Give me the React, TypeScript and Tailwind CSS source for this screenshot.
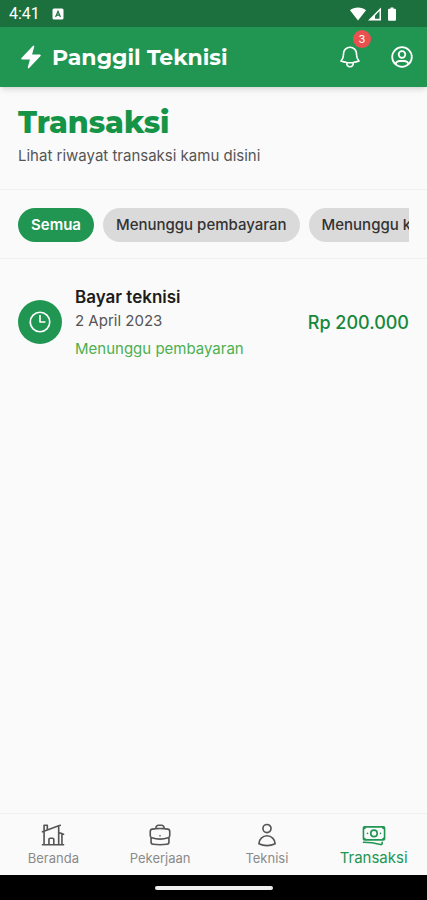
import React, { useState } from "react";
import classNames from "clsx";
import {
  HiBolt,
  HiOutlineBanknotes,
  HiOutlineBell,
  HiOutlineBriefcase,
  HiOutlineClock,
  HiOutlineHomeModern,
  HiOutlineUser,
} from "react-icons/hi2";

const filters = ["Semua", "Menunggu pembayaran", "Menunggu konfirmasi"];

const transactions = [
  {
    id: 1,
    title: "Bayar teknisi",
    date: "2 April 2023",
    status: "Menunggu pembayaran",
    total: "Rp 200.000",
  },
];

const tabs = [
  { label: "Beranda", icon: HiOutlineHomeModern },
  { label: "Pekerjaan", icon: HiOutlineBriefcase },
  { label: "Teknisi", icon: HiOutlineUser },
  { label: "Transaksi", icon: HiOutlineBanknotes },
];

const StatusBar: React.FC = () => {
  return (
    <div className="flex h-[27px] items-center bg-[#1b703e] pr-7 pl-[9px] text-white">
      <span className="font-['Roboto',sans-serif] text-base">4:41</span>
      <svg className="ml-3 size-3" viewBox="0 0 12 12">
        <rect x="0.5" y="0.5" width="11" height="11" rx="1.5" fill="#fff" />
        <path
          d="M3.6 9 6 3.2 8.4 9M4.5 7.2h3"
          fill="none"
          stroke="#1b703e"
          strokeWidth="1.2"
        />
      </svg>
      <svg className="ml-auto h-4 w-[50px]" viewBox="0 0 50 16" fill="#fff">
        <path d="M1 4.2C5.2.6 12.8.6 17 4.2L9 14.5Z" />
        <path d="M19 14.5 32 1.5V14.5Z" />
        <path d="M26 12.8V9.5L30.5 5V12.8Z" fill="#1b703e" />
        <path d="M41.5 1.5h3v1.3h1.5a1 1 0 0 1 1 1v10a1 1 0 0 1-1 1h-6a1 1 0 0 1-1-1v-10a1 1 0 0 1 1-1h1.5Z" />
      </svg>
    </div>
  );
};

const AccountIcon: React.FC = () => {
  return (
    <svg
      className="size-[26px]"
      viewBox="0 0 26 26"
      fill="none"
      stroke="currentColor"
      strokeWidth="1.8"
    >
      <circle cx="13" cy="13" r="9.8" />
      <circle cx="13" cy="10.5" r="3.3" />
      <path d="M6.4 20c.8-2 2.4-3 4.400-3h4.400c2 0 3.600 1 4.400 3" />
    </svg>
  );
};

const Header: React.FC = () => {
  return (
    <header className="z-10 flex h-[60px] items-center bg-[#219653] pr-3 pl-[18px] text-white shadow-md">
      <HiBolt className="size-[26px]" />
      <div className="ml-2 font-['Montserrat','Inter',sans-serif] text-[22px] font-bold">
        Panggil Teknisi
      </div>
      <button
        type="button"
        aria-label="Notifikasi"
        className="relative ml-auto"
      >
        <HiOutlineBell className="size-[26px]" />
        <span className="absolute -top-3.5 -right-2 flex size-[18px] items-center justify-center rounded-full bg-[#eb5050] text-[11px]">
          3
        </span>
      </button>
      <button type="button" aria-label="Profil" className="ml-[26px]">
        <AccountIcon />
      </button>
    </header>
  );
};

const TabBar: React.FC = () => {
  const [active, setActive] = useState("Transaksi");

  return (
    <nav className="grid h-[62px] grid-cols-4 border-t border-[#f1f1f1] bg-[#fafafa]">
      {tabs.map(({ label, icon: Icon }) => (
        <button
          key={label}
          type="button"
          onClick={() => setActive(label)}
          className={classNames(
            "flex flex-col items-center justify-center",
            active === label
              ? "text-[15px] leading-5 text-[#219653]"
              : "text-[13px] leading-5 text-[#8a8a8a]"
          )}
        >
          <Icon
            className={classNames("size-[26px]", {
              "text-[#555]": active !== label,
            })}
          />
          {label}
        </button>
      ))}
    </nav>
  );
};

const App: React.FC = () => {
  const [filter, setFilter] = useState("Semua");

  return (
    <div className="flex min-h-screen flex-col bg-[#fafafa] font-['Inter',sans-serif]">
      <StatusBar />
      <Header />
      <main className="flex flex-1 flex-col">
        <div className="border-b border-[#f1f1f1] px-[18px] pt-4 pb-[22px]">
          <h1 className="font-['Montserrat','Inter',sans-serif] text-[30px] leading-10 font-extrabold text-[#159447]">
            Transaksi
          </h1>
          <p className="mt-0.5 text-[15px] leading-[22px] text-[#555]">
            Lihat riwayat transaksi kamu disini
          </p>
        </div>
        <div className="border-b border-[#f1f1f1] px-[18px] pt-[18px] pb-4">
          <div className="flex gap-[9px] overflow-hidden">
            {filters.map((item) => (
              <button
                key={item}
                type="button"
                onClick={() => setFilter(item)}
                className={classNames(
                  "h-[34px] shrink-0 rounded-full px-[13px] text-[15px] whitespace-nowrap",
                  filter === item
                    ? "bg-[#219653] font-semibold text-white"
                    : "bg-[#dadada] font-medium text-[#333]"
                )}
              >
                {item}
              </button>
            ))}
          </div>
        </div>
        <ul className="px-[18px] py-6">
          {transactions.map((item) => (
            <li key={item.id} className="flex items-center">
              <div className="flex size-11 items-center justify-center rounded-full bg-[#219653] text-white">
                <HiOutlineClock className="size-[26px]" />
              </div>
              <div className="ml-[13px]">
                <div className="text-[17px] leading-7 font-semibold text-[#1c1c1c]">
                  {item.title}
                </div>
                <div className="text-[15px] leading-5 text-[#555]">
                  {item.date}
                </div>
                <div className="mt-1.5 text-[15px] leading-6 text-[#4caf50]">
                  {item.status}
                </div>
              </div>
              <div className="ml-auto text-[18px] font-medium text-[#16883b]">
                {item.total}
              </div>
            </li>
          ))}
        </ul>
      </main>
      <TabBar />
      <div className="flex h-[25px] items-center justify-center bg-black">
        <div className="h-1 w-[118px] rounded-full bg-[#eee]" />
      </div>
    </div>
  );
};

export default App;
